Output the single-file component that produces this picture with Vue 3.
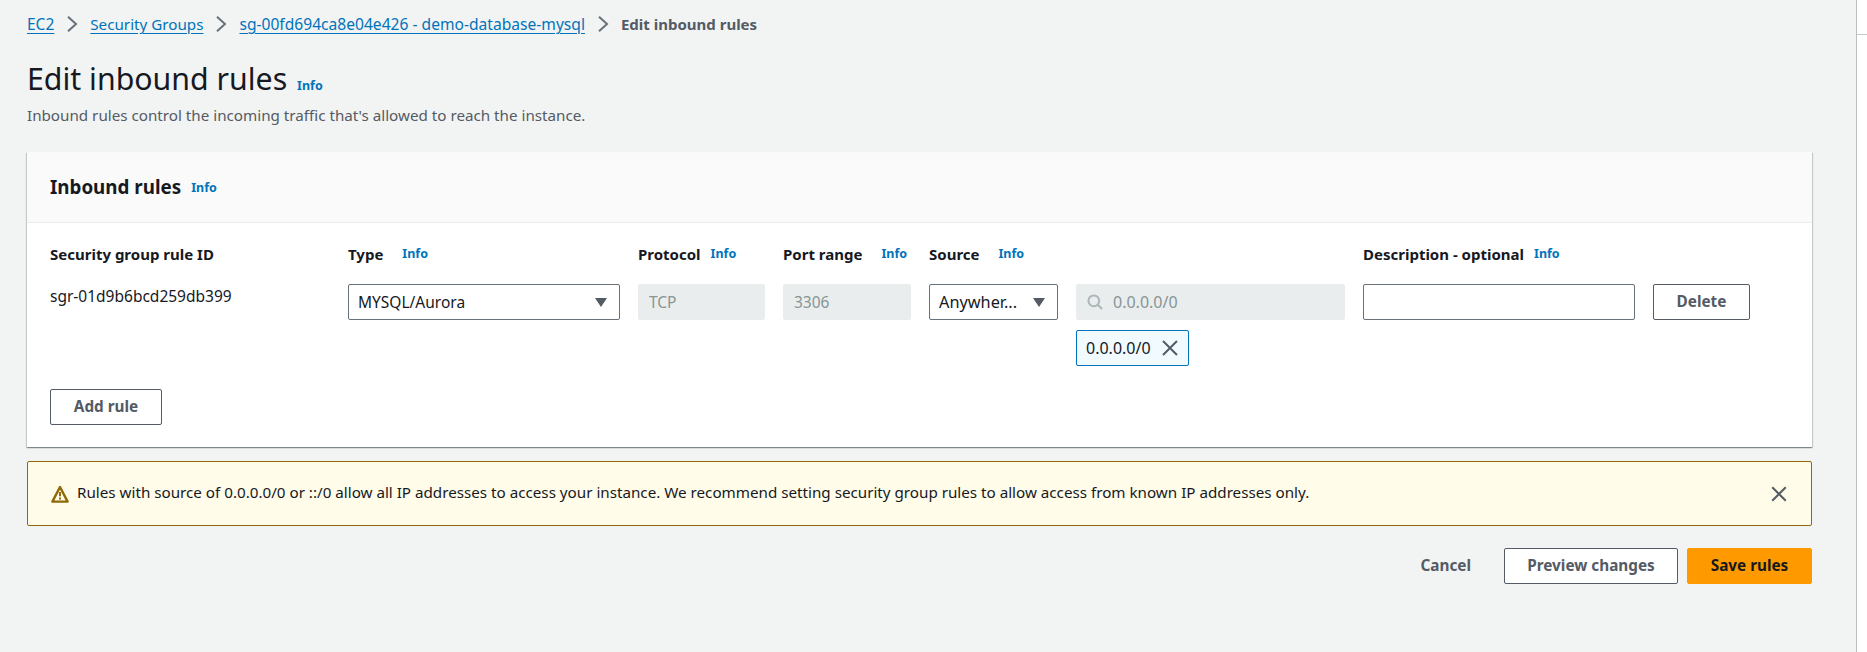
<template>
  <div class="page">
    <main class="content">
      <nav class="crumbs">
        <a class="crumb">EC2</a>
        <svg class="sep" viewBox="0 0 12 16"><path d="M2 .8 10 8 2 15.2" /></svg>
        <a class="crumb crumb-short">Security Groups</a>
        <svg class="sep" viewBox="0 0 12 16"><path d="M2 .8 10 8 2 15.2" /></svg>
        <a class="crumb crumb-long">sg-00fd694ca8e04e426 - demo-database-mysql</a>
        <svg class="sep" viewBox="0 0 12 16"><path d="M2 .8 10 8 2 15.2" /></svg>
        <span class="crumb-current">Edit inbound rules</span>
      </nav>

      <header class="page-head">
        <h1>Edit inbound rules <a class="info">Info</a></h1>
        <p>Inbound rules control the incoming traffic that's allowed to reach the instance.</p>
      </header>

      <section class="card">
        <div class="card-head">
          <h2>Inbound rules</h2>
          <a class="info">Info</a>
        </div>
        <div class="card-body">
          <div class="rule-grid">
            <div class="label">Security group rule ID</div>
            <div class="label wide">Type <a class="info">Info</a></div>
            <div class="label">Protocol <a class="info">Info</a></div>
            <div class="label wide">Port range <a class="info">Info</a></div>
            <div class="label wide">Source <a class="info">Info</a></div>
            <div></div>
            <div class="label">Description - optional <a class="info">Info</a></div>
            <div></div>

            <div class="rule-id">sgr-01d9b6bcd259db399</div>
            <div class="select">
              <span>MYSQL/Aurora</span>
              <svg class="caret" viewBox="0 0 14 12"><path d="M1 2h12L7 11z" /></svg>
            </div>
            <div class="input disabled">TCP</div>
            <div class="input disabled">3306</div>
            <div class="select source-select">
              <span>Anywher...</span>
              <svg class="caret" viewBox="0 0 14 12"><path d="M1 2h12L7 11z" /></svg>
            </div>
            <div class="source-cell">
              <div class="input disabled search">
                <svg class="search-icon" viewBox="0 0 16 16"><circle cx="6.8" cy="6.8" r="5.4" /><path d="m10.5 10.5 4.5 4.5" /></svg>
                <span>0.0.0.0/0</span>
              </div>
              <div class="token">
                <span>0.0.0.0/0</span>
                <svg class="close-icon" viewBox="0 0 16 16"><path d="m1 1 14 14M15 1 1 15" /></svg>
              </div>
            </div>
            <div class="input"></div>
            <button class="btn delete">Delete</button>
          </div>
          <button class="btn add">Add rule</button>
        </div>
      </section>

      <div class="alert">
        <svg class="warn-icon" viewBox="0 0 18 18">
          <path class="warn-outline" d="M9 2 1.4 16.6h15.2z" />
          <path class="warn-mark" d="M9 7v4.2M9 12.6v1.9" />
        </svg>
        <span class="alert-text">Rules with source of 0.0.0.0/0 or ::/0 allow all IP addresses to access your instance. We recommend setting security group rules to allow access from known IP addresses only.</span>
        <svg class="alert-close" viewBox="0 0 16 16"><path d="m2 2 12 12M14 2 2 14" /></svg>
      </div>

      <div class="actions">
        <a class="cancel">Cancel</a>
        <button class="btn preview">Preview changes</button>
        <button class="btn save">Save rules</button>
      </div>
    </main>
    <aside class="scroll-track"><div class="scroll-line"></div></aside>
  </div>
</template>

<script setup>
</script>

<style>
body {
  background: #f2f3f3;
}
</style>

<style scoped>
.page {
  display: flex;
  width: 1867px;
  height: 652px;
  overflow: hidden;
  background: #f2f3f3;
  font-family: "Noto Sans", sans-serif;
  font-size: 15.2px;
  color: #16191f;
}

.content {
  box-sizing: border-box;
  flex: 1;
  min-width: 0;
  padding: 0 44px 0 27px;
}

.scroll-track {
  box-sizing: border-box;
  flex: none;
  width: 11px;
  padding-top: 34px;
  background: #fff;
  border-left: 1px solid #b9bebe;
}

.scroll-line {
  height: 1px;
  background: #c4c9c9;
}

.crumbs {
  display: flex;
  align-items: center;
  height: 20px;
  padding-top: 14px;
  gap: 12px;
}

.crumb {
  color: #0073bb;
  font-size: 15.5px;
  text-decoration: underline;
  text-underline-offset: 3px;
}

.crumb-short {
  font-size: 15.2px;
}

.crumb-long {
  font-size: 15.6px;
}

.crumb-current {
  color: #545b64;
  font-size: 15px;
  font-weight: 700;
}

.sep {
  width: 12px;
  height: 16px;
  fill: none;
  stroke: #687078;
  stroke-width: 2;
}

.page-head {
  margin-top: 25px;
}

h1 {
  margin: 0;
  font-size: 30.3px;
  font-weight: 400;
  line-height: 40px;
}

.page-head p {
  margin: -1px 0 0;
  color: #545b64;
  line-height: 20px;
}

.info {
  color: #0073bb;
  font-size: 12.5px;
  font-weight: 700;
}

h1 .info {
  margin-left: 2px;
}

.card {
  margin-top: 27px;
  background: #fff;
  box-shadow: 0 1px 1px 0 rgba(0, 28, 36, 0.3), 1px 1px 1px 0 rgba(0, 28, 36, 0.15), -1px 1px 1px 0 rgba(0, 28, 36, 0.15);
}

.card-head {
  display: flex;
  align-items: center;
  gap: 10px;
  height: 71px;
  padding-left: 23px;
  background: #fafafa;
  border-bottom: 1px solid #eaeded;
  box-sizing: border-box;
}

h2 {
  margin: 0;
  font-size: 18.8px;
  font-weight: 700;
}

.card-body {
  padding: 18px 23px 22px;
}

.rule-grid {
  display: grid;
  grid-template-columns: 280px 272px 127px 128px 129px 269px 272px 97px;
  column-gap: 18px;
  row-gap: 17px;
  align-items: start;
}

.label {
  display: flex;
  align-items: center;
  gap: 10px;
  font-size: 15px;
  font-weight: 700;
  line-height: 26px;
  white-space: nowrap;
}

.label.wide {
  gap: 19px;
}

.rule-id {
  font-size: 15.5px;
  line-height: 24px;
}

.select,
.input {
  box-sizing: border-box;
  height: 36px;
  display: flex;
  align-items: center;
  padding: 0 10px;
  background: #fff;
  border: 1px solid #687078;
  border-radius: 2px;
  font-size: 15.5px;
}

.select {
  justify-content: space-between;
  padding: 0 11px 0 9px;
}

.source-select {
  font-size: 16.3px;
}

.caret {
  flex: none;
  width: 14px;
  height: 12px;
  fill: #545b64;
}

.disabled {
  background: #eaeded;
  border-color: #eaeded;
  color: #879596;
}

.search {
  gap: 10px;
  font-size: 16px;
}

.search-icon {
  width: 16px;
  height: 16px;
  fill: none;
  stroke: #aab7b8;
  stroke-width: 2;
}

.source-cell {
  display: flex;
  flex-direction: column;
  gap: 10px;
  align-items: flex-start;
}

.source-cell .search {
  width: 100%;
}

.token {
  box-sizing: border-box;
  display: flex;
  align-items: center;
  gap: 11px;
  height: 36px;
  padding: 0 10px 0 9px;
  background: #f1faff;
  border: 1px solid #0073bb;
  border-radius: 2px;
  font-size: 16px;
}

.close-icon {
  width: 16px;
  height: 16px;
  fill: none;
  stroke: #545b64;
  stroke-width: 2;
}

.alert-close {
  width: 18px;
  height: 18px;
  fill: none;
  stroke: #545b64;
  stroke-width: 1.8;
}

.btn {
  box-sizing: border-box;
  height: 36px;
  padding: 0 0 2px;
  background: #fff;
  border: 1px solid #545b64;
  border-radius: 2px;
  color: #545b64;
  font-family: inherit;
  font-size: 15.3px;
  font-weight: 700;
}

.add {
  display: block;
  margin-top: 23px;
  width: 112px;
}

.alert {
  box-sizing: border-box;
  display: flex;
  align-items: center;
  height: 65px;
  margin-top: 14px;
  padding: 0 23px;
  background: #fffce9;
  border: 1px solid #906806;
  border-radius: 2px;
}

.warn-icon {
  width: 18px;
  height: 18px;
  flex: none;
}

.warn-outline {
  fill: none;
  stroke: #906806;
  stroke-width: 2.4;
  stroke-linejoin: round;
}

.warn-mark {
  fill: none;
  stroke: #906806;
  stroke-width: 2;
}

.alert-text {
  flex: 1;
  margin-left: 8px;
  padding-bottom: 3px;
}

.actions {
  display: flex;
  align-items: center;
  justify-content: flex-end;
  gap: 9px;
  margin-top: 22px;
}

.cancel {
  margin-right: 24px;
  padding-bottom: 2px;
  color: #545b64;
  font-size: 15.3px;
  font-weight: 700;
}

.preview {
  width: 174px;
}

.save {
  width: 125px;
  background: #ff9900;
  border-color: #ff9900;
  color: #16191f;
}
</style>
